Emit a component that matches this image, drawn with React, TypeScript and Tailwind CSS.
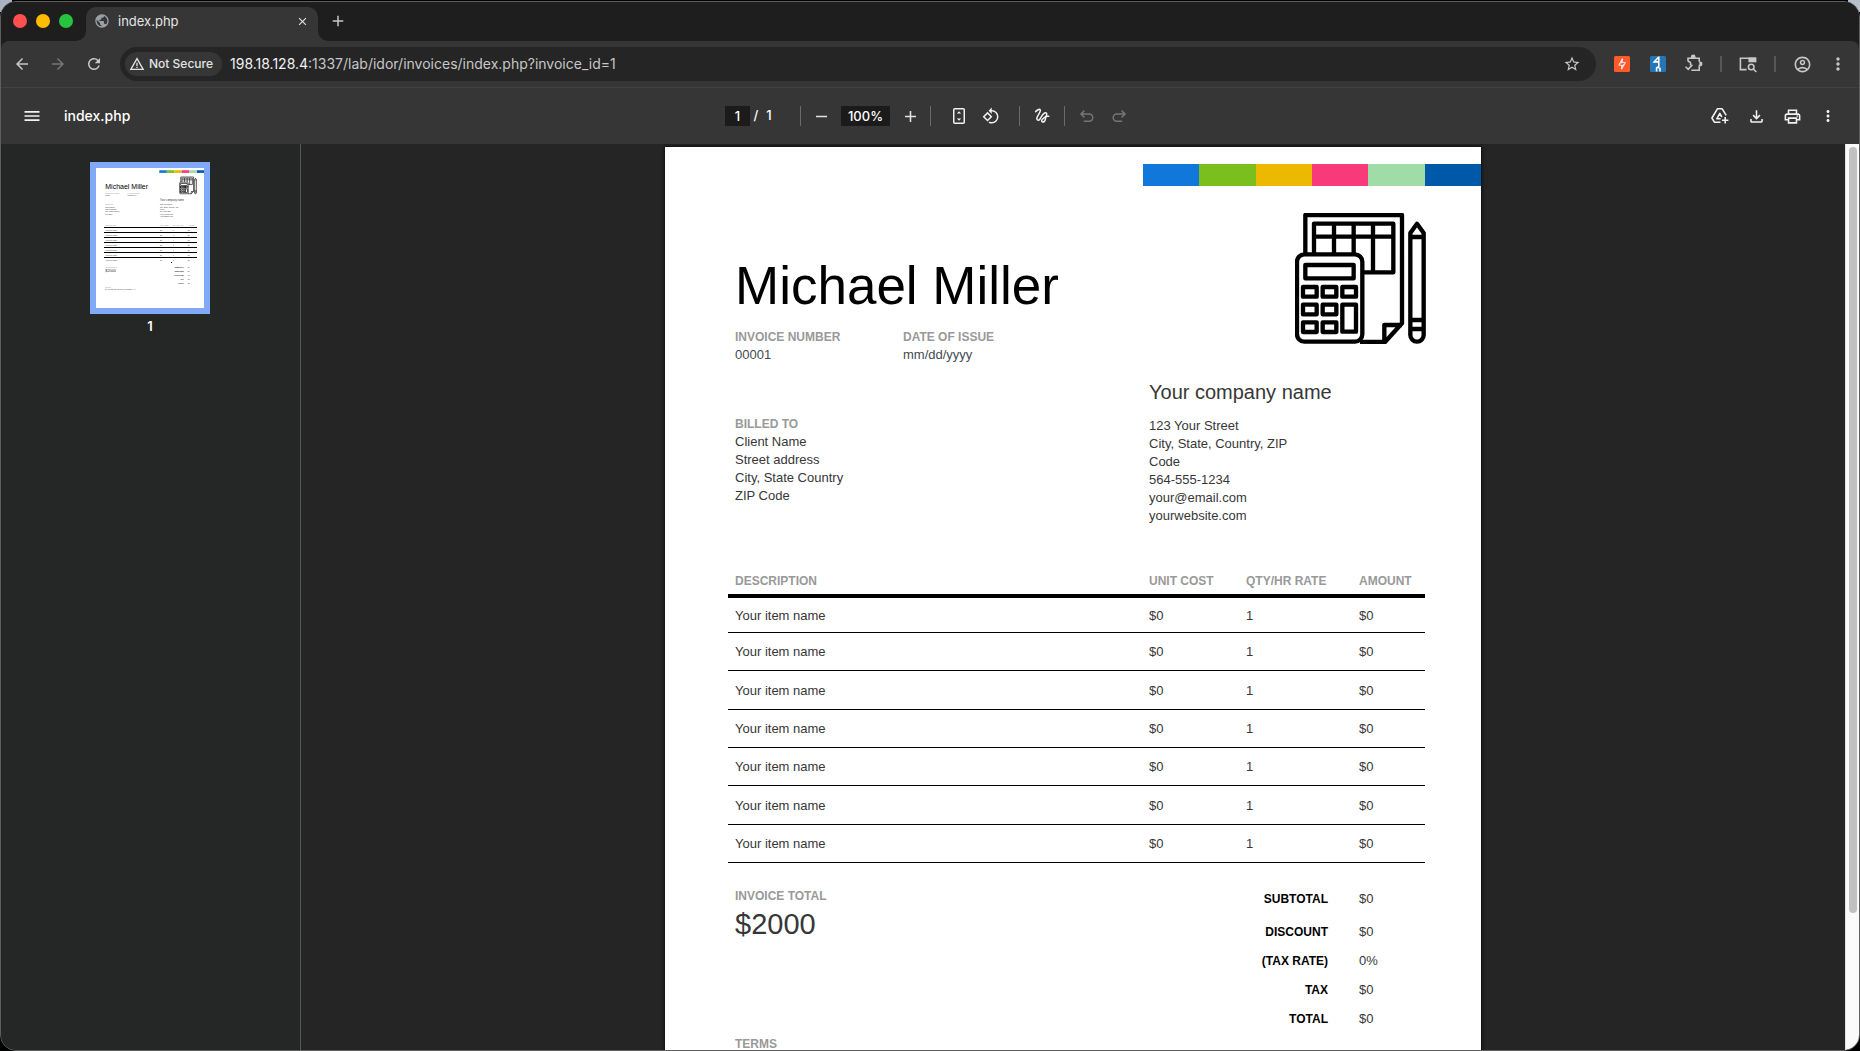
import { useState } from "react";
import type { ReactNode } from "react";
import {
  MdAdd,
  MdArrowBack,
  MdArrowForward,
  MdClose,
  MdMenu,
  MdMoreVert,
  MdOutlineAccountCircle,
  MdOutlineFileDownload,
  MdOutlinePrint,
  MdPublic,
  MdRefresh,
  MdRemove,
  MdRotate90DegreesCcw,
  MdStarBorder,
  MdWarningAmber,
} from "react-icons/md";

interface LineItem {
  name: string;
  cost: string;
  qty: string;
  amount: string;
}

const ITEMS: LineItem[] = Array.from({ length: 7 }, () => ({
  name: "Your item name",
  cost: "$0",
  qty: "1",
  amount: "$0",
}));

const TOTALS = [
  { label: "SUBTOTAL", value: "$0" },
  { label: "DISCOUNT", value: "$0" },
  { label: "(TAX RATE)", value: "0%" },
  { label: "TAX", value: "$0" },
  { label: "TOTAL", value: "$0" },
];

const STRIPES = ["bg-[#1178db]", "bg-[#7abf1d]", "bg-[#edb800]", "bg-[#f83a7a]", "bg-[#9fdca8]", "bg-[#0058a8]"];
const STRIPE_HEX = ["#1178db", "#7abf1d", "#edb800", "#f83a7a", "#9fdca8", "#0058a8"];

function IconButton({ label, children, className = "text-[#c7c7c7]" }: { label: string; children: ReactNode; className?: string }) {
  return (
    <button type="button" aria-label={label} className={`flex size-8 shrink-0 items-center justify-center rounded-full ${className}`}>
      {children}
    </button>
  );
}

/* ---------- icons ---------- */

function PuzzleIcon() {
  return (
    <svg width="20" height="20" viewBox="0 0 20 20" fill="none" stroke="currentColor" strokeWidth="1.6">
      <path d="M4 7.5V4.2h11.2v3.6M15.2 12.2v4H7.4" />
      <path d="M7.6 4V2.9a1.6 1.6 0 0 1 3.2 0V4M15.4 8.4h.7a1.6 1.6 0 0 1 0 3.2h-.7v1" fill="currentColor" />
      <path d="M4 7.4c2.4 0 3.4 2 2.2 3.8" />
      <path d="m1.6 12.8 2.6 2.6 4.2-4.6" />
    </svg>
  );
}

function TabSearchIcon() {
  return (
    <svg width="20" height="20" viewBox="0 0 20 20" fill="none" stroke="currentColor" strokeWidth="1.6">
      <path d="M8.6 15.6H2.4V4.2h15.2v4" />
      <path d="M10.4 3.6h7.4v4.6h-7.4z" fill="currentColor" stroke="none" />
      <circle cx="13.2" cy="13" r="2.8" />
      <path d="m15.3 15 3 3" />
    </svg>
  );
}

function BoltIcon() {
  return (
    <svg width="16" height="16" viewBox="0 0 16 16">
      <rect width="16" height="16" rx="1.5" fill="#ff5a2b" />
      <path d="M8.400 2.600v4h3L7.600 13.200V9.200H4.800z" fill="none" stroke="#fff" strokeWidth=".9" />
      <path d="M8.400 3 5.600 7.600h2.800zM7.600 12.800l2.800-4.600H7.600z" fill="#ffe0d6" />
      <path d="M7.200 7.300h1.800v1.400H7.200z" fill="#ff5a2b" />
    </svg>
  );
}

function WalkerIcon() {
  return (
    <svg width="16" height="16" viewBox="0 0 16 16">
      <rect width="16" height="16" rx="1.5" fill="#2676b5" />
      <path d="M8.800.500v5.400H4.200l4-4.400M8.800 5.500v4.800L6.600 12v3.600M8.400 11.600l1.600.800v3.200" fill="none" stroke="#fff" strokeWidth="1.6" />
    </svg>
  );
}

function FitPageIcon() {
  return (
    <svg width="20" height="20" viewBox="0 0 20 20" fill="none" stroke="currentColor" strokeWidth="1.5">
      <rect x="4.75" y="2.75" width="10.5" height="14.5" rx="1" />
      <path d="M10 5.2 12.200 7.600H7.800zM10 14.800 7.800 12.400h4.400z" fill="currentColor" stroke="none" />
    </svg>
  );
}

function InkIcon() {
  return (
    <svg width="20" height="20" viewBox="0 0 20 20" fill="none" stroke="currentColor" strokeWidth="1.5" strokeLinecap="round">
      <path d="M3.600 5.600c1.400-1.400 3.600-3 4.600-1.800 1.400 1.800-3.600 6-3.400 9 .2 2 2.200 1.800 3.200.2 1.400-2.200 2.600-5 4.600-6 2-.9 2.800 1 1.600 2.800-1.200 2-4.400 2.600-4.600 5 0 1.400 1.600 1.800 2.800.6 1.400-1.400 1-4.800 2.200-5.200h2.200" />
    </svg>
  );
}

function DriveIcon() {
  return (
    <svg width="20" height="20" viewBox="0 0 20 20" fill="none" stroke="currentColor" strokeWidth="1.6" strokeLinejoin="round">
      <path d="M10.500 16.200H4.400L1.900 12 7.400 2.800h4.800l4 6.600" />
      <path d="M10.600 12.800H6.800L9.800 7.400l2 3.600" />
      <path d="M15.200 11v6.400M12 14.200h6.400" />
    </svg>
  );
}

function UndoIcon({ flip = false }: { flip?: boolean }) {
  return (
    <svg width="20" height="20" viewBox="0 0 20 20" fill="none" stroke="currentColor" strokeWidth="1.5">
      {flip ? (
        <path d="M12.600 4.600 16 8l-3.400 3.400M15.800 8H7.800a3.600 3.600 0 0 0 0 7.200h5.400" />
      ) : (
        <path d="M7.400 4.600 4 8l3.400 3.400M4.200 8h8a3.600 3.600 0 0 1 0 7.200H6.800" />
      )}
    </svg>
  );
}

function CalculatorArt() {
  return (
    <>
      <path d="M31 120V6h290v325l-51 56h-75M321 336h-53v51" />
      <path d="M57 120V32h238v146h-90M57 71h238M117 32v88M176 32v88M234 32v146" />
      <rect x="6" y="124" width="196" height="262" rx="22" fill="#fff" />
      <rect x="31" y="156" width="145" height="40" />
      {[222, 275, 328].map((y) =>
        [24, 83, 142].map((x) =>
          x === 142 && y > 222 ? null : <rect key={`${x}-${y}`} x={x} y={y} width="41" height="29" />
        )
      )}
      <rect x="142" y="275" width="41" height="81" />
      <path d="M346 60l20-28 20 28v306a20 20 0 0 1-40 0zM346 72h40M346 321h40M346 348h40" />
    </>
  );
}

/* ---------- browser chrome ---------- */

function TabFlare({ right = false }: { right?: boolean }) {
  return (
    <svg width="10" height="10" viewBox="0 0 10 10" className="shrink-0 self-end">
      <path d={right ? "M0 0v10h10A10 10 0 0 1 0 0z" : "M10 0v10H0A10 10 0 0 0 10 0z"} fill="#363636" />
    </svg>
  );
}

function TabStrip() {
  return (
    <header className="flex h-[39px] shrink-0 items-center bg-[#1e1e1e] pb-px pl-3">
      <div className="flex gap-[9px]">
        <button type="button" aria-label="Close window" className="size-3.5 rounded-full bg-[#ff4f4f]" />
        <button type="button" aria-label="Minimize window" className="size-3.5 rounded-full bg-[#fdbc00]" />
        <button type="button" aria-label="Zoom window" className="size-3.5 rounded-full bg-[#28c440]" />
      </div>
      <div className="-mb-px ml-[3px] flex h-[34px] self-end">
        <TabFlare />
        <div className="flex w-[232px] items-center rounded-t-[10px] bg-[#363636] px-2 pb-1.5 text-[#e3e3e3]">
          <MdPublic size={16} className="text-[#9aa0a6]" />
          <span className="ml-2 flex-1 text-[13px] leading-4">index.php</span>
          <button type="button" aria-label="Close tab" className="flex size-4 items-center justify-center">
            <MdClose size={13} />
          </button>
        </div>
        <TabFlare right />
      </div>
      <button type="button" aria-label="New tab" className="flex size-5 items-center justify-center text-[#c7c7c7]">
        <MdAdd size={18} />
      </button>
    </header>
  );
}

function AddressBar() {
  return (
    <nav className="flex h-[46px] shrink-0 items-center rounded-t-lg bg-[#363636] px-[5px]">
      <div className="flex gap-1">
        <IconButton label="Back"><MdArrowBack size={18} /></IconButton>
        <IconButton label="Forward" className="text-[#757575]"><MdArrowForward size={18} /></IconButton>
        <IconButton label="Reload"><MdRefresh size={18} /></IconButton>
      </div>
      <div className="mx-[10px] flex h-[34px] flex-1 items-center rounded-full bg-[#252525] pl-[5px]">
        <button type="button" className="flex h-6 w-[97px] items-center gap-1 rounded-full bg-[#363636] pl-1 text-[12px] font-medium whitespace-nowrap text-[#e3e3e3]">
          <MdWarningAmber size={16} className="shrink-0" />
          Not Secure
        </button>
        <div className="ml-2 flex-1 text-[14px] leading-5 text-[#c7c7c7]">
          <span className="text-[#f1f1f1]">198.18.128.4</span>:1337/lab/idor/invoices/index.php?invoice_id=1
        </div>
        <IconButton label="Bookmark this tab" className="mr-2 text-[#c7c7c7]"><MdStarBorder size={18} /></IconButton>
      </div>
      <div className="flex gap-1">
        <IconButton label="Burp extension"><BoltIcon /></IconButton>
        <IconButton label="Proxy extension"><WalkerIcon /></IconButton>
        <IconButton label="Extensions"><PuzzleIcon /></IconButton>
      </div>
      <span className="mx-[10px] h-4 w-0.5 bg-[#575757]" />
      <IconButton label="Side panel"><TabSearchIcon /></IconButton>
      <span className="mx-[10px] h-4 w-0.5 bg-[#575757]" />
      <div className="flex gap-1">
        <IconButton label="Profile"><MdOutlineAccountCircle size={19} /></IconButton>
        <IconButton label="Menu"><MdMoreVert size={20} /></IconButton>
      </div>
    </nav>
  );
}

/* ---------- pdf viewer ---------- */

function Divider() {
  return <span className="h-5 w-px bg-[#6b6b6b]" />;
}

function PdfToolbar() {
  const [page, setPage] = useState("1");
  const [zoom, setZoom] = useState("100%");

  return (
    <div className="flex h-[57px] shrink-0 items-center border-t border-[#424242] bg-[#363636] px-[15px] text-white">
      <div className="flex flex-1 items-center gap-4">
        <IconButton label="Toggle sidebar" className="text-[#f1f1f1]"><MdMenu size={20} /></IconButton>
        <span className="text-[14px] leading-5 font-medium">index.php</span>
      </div>

      <div className="flex items-center text-[13px] font-medium">
        <input
          aria-label="Page number"
          value={page}
          onChange={(e) => setPage(e.target.value)}
          className="h-5 w-[25px] bg-[#1b1b1b] text-center outline-none"
        />
        <span className="w-3 text-center">/</span>
        <span className="mr-6 w-3.5 text-center">1</span>
        <Divider />
        <div className="mx-1 flex items-center gap-1">
          <IconButton label="Zoom out" className="text-[#e3e3e3]"><MdRemove size={19} /></IconButton>
          <input
            aria-label="Zoom level"
            value={zoom}
            onChange={(e) => setZoom(e.target.value)}
            className="h-5 w-[49px] bg-[#1b1b1b] text-center outline-none"
          />
          <IconButton label="Zoom in" className="text-[#e3e3e3]"><MdAdd size={19} /></IconButton>
        </div>
        <Divider />
        <div className="mx-3 flex">
          <IconButton label="Fit to page" className="text-[#f1f1f1]"><FitPageIcon /></IconButton>
          <IconButton label="Rotate counterclockwise" className="text-[#f1f1f1]"><MdRotate90DegreesCcw size={18} /></IconButton>
        </div>
        <Divider />
        <div className="mx-1.5">
          <IconButton label="Draw" className="text-[#f1f1f1]"><InkIcon /></IconButton>
        </div>
        <Divider />
        <div className="ml-1.5 flex">
          <IconButton label="Undo" className="text-[#757575]"><UndoIcon /></IconButton>
          <IconButton label="Redo" className="text-[#757575]"><UndoIcon flip /></IconButton>
        </div>
      </div>

      <div className="flex flex-1 items-center justify-end gap-1">
        <IconButton label="Save to Drive" className="text-[#f1f1f1]"><DriveIcon /></IconButton>
        <IconButton label="Download" className="text-[#f1f1f1]"><MdOutlineFileDownload size={19} /></IconButton>
        <IconButton label="Print" className="text-[#f1f1f1]"><MdOutlinePrint size={19} /></IconButton>
        <IconButton label="More actions" className="text-[#f1f1f1]"><MdMoreVert size={18} /></IconButton>
      </div>
    </div>
  );
}

// Miniature of the invoice, drawn in page units
function Thumbnail() {
  return (
    <svg viewBox="0 0 816 1058" className="h-[140px] w-[108px] bg-white" fontFamily="Liberation Sans, Arial, sans-serif" fontSize="13" fill="#333">
      {STRIPE_HEX.map((hex, i) => (
        <rect key={hex} x={478 + i * 57} y="17" width="57" height="20" fill={hex} />
      ))}
      <g transform="translate(630 66) scale(.333)" fill="none" stroke="#000" strokeWidth="14">
        <CalculatorArt />
      </g>
      <text x="70" y="158" fontSize="53" fill="#000">Michael Miller</text>
      <text x="70" y="194" fontSize="12" fill="#999">INVOICE NUMBER</text>
      <text x="238" y="194" fontSize="12" fill="#999">DATE OF ISSUE</text>
      <text x="70" y="213">00001</text>
      <text x="238" y="213">mm/dd/yyyy</text>
      <text x="484" y="251" fontSize="20">Your company name</text>
      {["123 Your Street", "City, State, Country, ZIP", "Code", "564-555-1234", "your@email.com", "yourwebsite.com"].map((t, i) => (
        <text key={t} x="484" y={282 + i * 18}>{t}</text>
      ))}
      <text x="70" y="281" fontSize="12" fill="#999">BILLED TO</text>
      {["Client Name", "Street address", "City, State Country", "ZIP Code"].map((t, i) => (
        <text key={t} x="70" y={299 + i * 18}>{t}</text>
      ))}
      <g fontSize="12" fill="#999">
        <text x="70" y="438">DESCRIPTION</text>
        <text x="484" y="438">UNIT COST</text>
        <text x="581" y="438">QTY/HR RATE</text>
        <text x="694" y="438">AMOUNT</text>
      </g>
      {ITEMS.map((item, i) => (
        <g key={i}>
          <rect x="60" y={446 + i * 38} width="703" height="7" fill="#000" shapeRendering="crispEdges" />
          <text x="70" y={474 + i * 38}>{item.name}</text>
          <text x="484" y={474 + i * 38}>{item.cost}</text>
          <text x="581" y={474 + i * 38}>{item.qty}</text>
          <text x="694" y={474 + i * 38}>{item.amount}</text>
        </g>
      ))}
      <rect x="567" y="710" width="7" height="7" fill="#000" shapeRendering="crispEdges" />
      <text x="70" y="753" fontSize="12" fill="#999">INVOICE TOTAL</text>
      <text x="70" y="787" fontSize="29">$2000</text>
      {TOTALS.map((row, i) => (
        <g key={row.label}>
          <text x="663" y={757 + i * 30} textAnchor="end" fontWeight="bold" fill="#000">{row.label}</text>
          <text x="694" y={757 + i * 30}>{row.value}</text>
        </g>
      ))}
      <text x="70" y="905" fontSize="12" fill="#999">TERMS</text>
      <text x="70" y="922">Ex: Please pay invoice by MM/DD/YYYY</text>
    </svg>
  );
}

function Sidebar() {
  return (
    <aside className="flex w-[300px] shrink-0 flex-col items-center border-r border-[#575757] bg-[#242726] pt-[18px] pr-px">
      <button type="button" aria-label="Page 1" className="bg-[#80aaf7] p-1.5">
        <Thumbnail />
      </button>
      <span className="mt-1 text-[13px] leading-4 font-semibold text-white">1</span>
    </aside>
  );
}

function Invoice() {
  return (
    <article className="flex w-[816px] shrink-0 flex-col bg-white pb-20 font-['Liberation_Sans',Arial,sans-serif] text-[13px] leading-[18px] text-[#373737] shadow-[0_0_4px_#000]">
      <div className="mt-[17px] grid h-[22px] w-[338px] grid-cols-6 self-end">
        {STRIPES.map((color) => (
          <span key={color} className={color} />
        ))}
      </div>

      <section className="flex justify-between pr-[55px] pl-[70px]">
        <div className="pt-[70px]">
          <h1 className="text-[53px] leading-[60px] text-black">Michael Miller</h1>
          <dl className="mt-3 flex text-[#434a54]">
            <div className="w-[168px]">
              <dt className="text-[12px] font-bold text-[#999]">INVOICE NUMBER</dt>
              <dd>00001</dd>
            </div>
            <div>
              <dt className="text-[12px] font-bold text-[#999]">DATE OF ISSUE</dt>
              <dd>mm/dd/yyyy</dd>
            </div>
          </dl>
          <h2 className="mt-[51px] text-[12px] font-bold text-[#999]">BILLED TO</h2>
          <address className="not-italic">
            Client Name<br />
            Street address<br />
            City, State Country<br />
            ZIP Code
          </address>
        </div>

        <div className="flex w-[277px] flex-col">
          <svg viewBox="0 0 393 393" className="mt-[27px] size-[131px] self-end" fill="none" stroke="#000" strokeWidth="13" strokeLinejoin="round">
            <CalculatorArt />
          </svg>
          <h2 className="mt-9 text-[20px] leading-6">Your company name</h2>
          <address className="mt-[13px] w-[160px] not-italic">
            123 Your Street<br />
            City, State, Country, ZIP Code<br />
            564-555-1234<br />
            your@email.com<br />
            yourwebsite.com
          </address>
        </div>
      </section>

      <table className="mt-[43px] ml-[63px] w-[697px] table-fixed border-separate border-spacing-0 text-left">
        <colgroup>
          <col className="w-[414px]" />
          <col className="w-[97px]" />
          <col className="w-[113px]" />
          <col />
        </colgroup>
        <thead>
          <tr className="h-[30px] text-[12px] text-[#999]">
            {["DESCRIPTION", "UNIT COST", "QTY/HR RATE", "AMOUNT"].map((heading) => (
              <th key={heading} scope="col" className="border-b-4 border-black p-0 pl-[7px] font-bold whitespace-nowrap">
                {heading}
              </th>
            ))}
          </tr>
        </thead>
        <tbody>
          {ITEMS.map((item, i) => (
            <tr key={i} className="h-[38px] first:h-[35px] nth-[3n]:h-[39px]">
              <td className="border-b border-black p-0 pt-px pl-[7px]">{item.name}</td>
              <td className="border-b border-black p-0 pt-px pl-[7px]">{item.cost}</td>
              <td className="border-b border-black p-0 pt-px pl-[7px]">{item.qty}</td>
              <td className="border-b border-black p-0 pt-px pl-[7px]">{item.amount}</td>
            </tr>
          ))}
        </tbody>
      </table>

      <section className="flex justify-between pr-14 pl-[70px]">
        <div className="pt-6">
          <h2 className="text-[12px] font-bold text-[#999]">INVOICE TOTAL</h2>
          <p className="mt-px text-[29px] leading-9">$2000</p>
        </div>
        <table className="mt-[17px] border-separate border-spacing-0">
          <tbody>
            {TOTALS.map((row) => (
              <tr key={row.label} className="h-[29px] first:h-[37px]">
                <th scope="row" className="p-0 text-right text-[12px] font-bold text-black">{row.label}</th>
                <td className="w-[97px] p-0 pl-[31px]">{row.value}</td>
              </tr>
            ))}
          </tbody>
        </table>
      </section>

      <h2 className="mt-1 pl-[70px] text-[12px] leading-[14px] font-bold text-[#999]">TERMS</h2>
    </article>
  );
}

export default function App() {
  return (
    <div className="relative h-screen bg-black pt-px font-[Inter,'Noto_Sans',sans-serif]">
      {/* desktop showing behind the rounded window corners */}
      <span className="absolute top-0 left-0 size-3 bg-[#a9b3c2]" />
      <span className="absolute top-0 right-0 size-3 bg-[#b9bfc9]" />

      <div className="relative flex h-full flex-col overflow-hidden rounded-2xl border border-[#5e5e5e] bg-[#1e1e1e]">
        <TabStrip />
        <AddressBar />
        <PdfToolbar />
        <div className="flex min-h-0 flex-1">
          <Sidebar />
          <main className="flex min-w-0 flex-1 items-start justify-center overflow-hidden bg-[#252525] pt-[3px]">
            <Invoice />
          </main>
          <div className="w-3.5 shrink-0 border-l border-[#e3e3e3] bg-[#fafafa] pt-[3px] pl-[3px]">
            <div className="h-[766px] w-2 rounded-full bg-[#c1c1c1]" />
          </div>
        </div>
      </div>
    </div>
  );
}
